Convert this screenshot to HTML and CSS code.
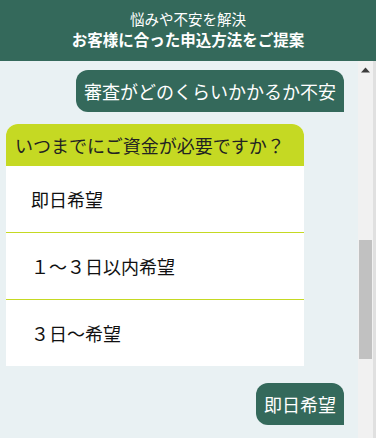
FILE: index.html
```html
<!DOCTYPE html>
<html lang="ja">

<head>
    <meta charset="UTF-8">
    <meta name="viewport" content="width=device-width, initial-scale=1.0">
    <title>申込方法のご提案</title>
    <link rel="stylesheet" href="styles.css">
</head>

<body>
    <header class="top">
        <p class="top-sub">悩みや不安を解決</p>
        <p class="top-title">お客様に合った申込方法をご提案</p>
    </header>

    <main class="chat">
        <div class="log">
            <div class="answer">審査がどのくらいかかるか不安</div>

            <div class="question">
                <div class="question-head">いつまでにご資金が必要ですか？</div>
                <div class="option">即日希望</div>
                <div class="option">１～３日以内希望</div>
                <div class="option">３日～希望</div>
            </div>

            <div class="answer">即日希望</div>
        </div>

        <div class="scrollbar">
            <div class="scroll-up">
                <svg class="arrow-up" width="9" height="6" viewBox="0 0 9 6"><polygon points="0,5.5 4.5,0.5 9,5.5" fill="#3c3c3c"/></svg>
            </div>
            <div class="scroll-thumb"></div>
        </div>
    </main>
</body>

</html>
```

FILE: styles.css
```css
body {
    margin: 0;
    padding: 0;
    font-family: "Noto Sans CJK JP", "Noto Sans", sans-serif;
    background-color: #e0e0e0;
    overflow: hidden;
}

.top {
    height: 61px;
    box-sizing: border-box;
    padding-top: 9px;
    background: #34695b;
    color: #fff;
    text-align: center;
}

.top p {
    margin: 0;
    line-height: 20px;
}

.top-sub {
    font-size: 14.5px;
}

.top-title {
    font-size: 15.5px;
    font-weight: bold;
}

.chat {
    display: flex;
    height: 377px;
    margin-right: 3px;
    overflow: hidden;
    background: #e9f1f3;
}

.log {
    flex: 1;
    display: flex;
    flex-direction: column;
    padding: 9px 14px 0 6px;
}

.question {
    width: 298px;
    margin-bottom: 17px;
    background: #fff;
    border-radius: 12px 12px 0 0;
    overflow: hidden;
}

.question-head {
    height: 42px;
    line-height: 42px;
    padding-left: 9px;
    background: #c5d923;
    color: #222;
    font-size: 18px;
}

.option {
    height: 66px;
    line-height: 66px;
    padding-left: 25px;
    color: #111;
    font-size: 18px;
}

.option + .option {
    border-top: 1px solid #c5d923;
}

.answer {
    align-self: flex-end;
    margin-bottom: 12px;
    padding: 10px 8px;
    line-height: 22px;
    background: #34695b;
    color: #fff;
    font-size: 18px;
    border-radius: 12px 12px 0 12px;
}

/* scrollbar of the chat window */
.scrollbar {
    flex: 0 0 15px;
    background: #f1f1f1;
}

.scroll-up {
    height: 15px;
    padding-top: 6px;
    box-sizing: border-box;
}

.arrow-up {
    display: block;
    margin: 0 auto;
}

.scroll-thumb {
    height: 119px;
    margin: 164px 1px 0;
    background: #c1c1c1;
}
```
